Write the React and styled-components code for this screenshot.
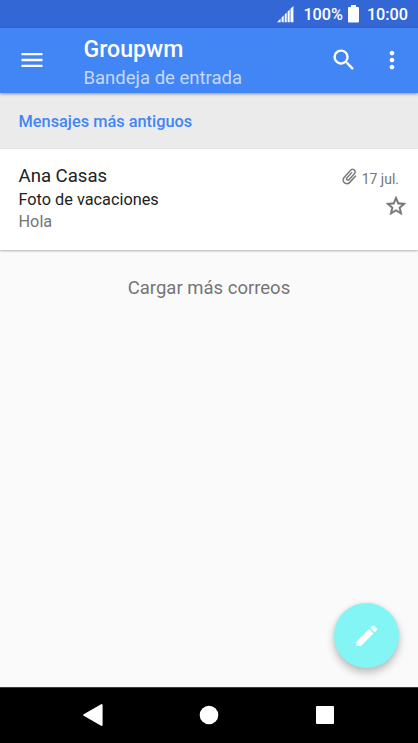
import React from 'react';
import styled, { createGlobalStyle } from 'styled-components';

const GlobalStyle = createGlobalStyle`
  * {
    box-sizing: border-box;
  }

  body {
    margin: 0;
    font-family: Roboto, "Liberation Sans", sans-serif;
  }
`;

function App() {
  return (
    <>
      <GlobalStyle />
      <Screen>
        <StatusBar>
          <SignalIcon viewBox="0 0 17 17">
            <path d="M0 16.2 L3.6 12.6 V16.2 Z M4.6 11.6 L6.7 9.5 V16.2 H4.6 Z M7.7 8.5 L9.7 6.5 V16.2 H7.7 Z M10.6 5.6 L12.7 3.6 V16.2 H10.6 Z M13.5 2.8 L16.4 0 V16.2 H13.5 Z" />
          </SignalIcon>
          <StatusText>100%</StatusText>
          <BatteryIcon viewBox="0 0 11 18">
            <path d="M3 0 H8 V2 H10 Q11 2 11 3 V16.5 Q11 17.5 10 17.5 H1 Q0 17.5 0 16.5 V3 Q0 2 1 2 H3 Z" />
          </BatteryIcon>
          <StatusText>10:00</StatusText>
        </StatusBar>

        <AppBar>
          <IconButton aria-label="Menú">
            <Icon viewBox="0 0 24 24">
              <path d="M3 18h18v-2H3v2zm0-5h18v-2H3v2zm0-7v2h18V6H3z" />
            </Icon>
          </IconButton>
          <Titles>
            <Title>Groupwm</Title>
            <Subtitle>Bandeja de entrada</Subtitle>
          </Titles>
          <Actions>
            <IconButton aria-label="Buscar">
              <Icon viewBox="0 0 24 24">
                <path d="M15.5 14h-.79l-.28-.27C15.41 12.59 16 11.11 16 9.5 16 5.91 13.09 3 9.5 3S3 5.91 3 9.5 5.91 16 9.5 16c1.61 0 3.09-.59 4.23-1.57l.27.28v.79l5 4.99L20.49 19l-4.99-5zm-6 0C7.01 14 5 11.99 5 9.5S7.01 5 9.5 5 14 7.01 14 9.5 11.99 14 9.5 14z" />
              </Icon>
            </IconButton>
            <IconButton aria-label="Más opciones">
              <Icon viewBox="0 0 24 24">
                <path d="M12 8c1.1 0 2-.9 2-2s-.9-2-2-2-2 .9-2 2 .9 2 2 2zm0 2c-1.1 0-2 .9-2 2s.9 2 2 2 2-.9 2-2-.9-2-2-2zm0 6c-1.1 0-2 .9-2 2s.9 2 2 2 2-.9 2-2-.9-2-2-2z" />
              </Icon>
            </IconButton>
          </Actions>
        </AppBar>

        <SectionHeader>Mensajes más antiguos</SectionHeader>

        <Message>
          <MessageText>
            <Sender>Ana Casas</Sender>
            <Subject>Foto de vacaciones</Subject>
            <Preview>Hola</Preview>
          </MessageText>
          <MessageMeta>
            <DateRow>
              <ClipIcon viewBox="0 0 24 24">
                <path d="M16.5 6v11.5c0 2.21-1.79 4-4 4s-4-1.79-4-4V5c0-1.38 1.12-2.5 2.5-2.5s2.5 1.12 2.5 2.5v10.5c0 .55-.45 1-1 1s-1-.45-1-1V6H10v9.5c0 1.38 1.12 2.5 2.5 2.5s2.5-1.12 2.5-2.5V5c0-2.21-1.79-4-4-4S7 2.79 7 5v12.5c0 3.04 2.46 5.5 5.5 5.5s5.5-2.46 5.5-5.5V6h-1.5z" />
              </ClipIcon>
              <DateText>17 jul.</DateText>
            </DateRow>
            <StarIcon viewBox="0 0 24 24">
              <path d="M22 9.24l-7.19-.62L12 2 9.19 8.63 2 9.24l5.46 4.73L5.82 21 12 17.27 18.18 21l-1.63-7.03L22 9.24zM12 15.4l-3.76 2.27 1-4.28-3.32-2.88 4.38-.38L12 6.1l1.71 4.04 4.38.38-3.32 2.88 1 4.28L12 15.4z" />
            </StarIcon>
          </MessageMeta>
        </Message>

        <LoadMore>Cargar más correos</LoadMore>

        <ComposeButton aria-label="Redactar">
          <PencilIcon viewBox="0 0 24 24">
            <path d="M3 17.46v3.04c0 .28.22.5.5.5h3.04c.13 0 .26-.05.35-.15L17.81 9.94l-3.75-3.75L3.15 17.1c-.1.1-.15.22-.15.36zM20.71 7.04c.39-.39.39-1.02 0-1.41l-2.34-2.34c-.39-.39-1.02-.39-1.41 0l-1.83 1.83 3.75 3.75 1.83-1.83z" />
          </PencilIcon>
        </ComposeButton>

        <NavBar>
          <NavIcon viewBox="0 0 24 24">
            <path d="M3.2 12 L20.6 2 V22 Z" strokeWidth="2" strokeLinejoin="round" />
          </NavIcon>
          <NavIcon viewBox="0 0 24 24">
            <circle cx="12" cy="12" r="9.3" />
          </NavIcon>
          <NavIcon viewBox="0 0 24 24">
            <rect x="3" y="3" width="18" height="18" rx="1" />
          </NavIcon>
        </NavBar>
      </Screen>
    </>
  );
}

const Screen = styled.main`
  position: relative;
  display: flex;
  flex-direction: column;
  height: 743px;
  overflow: hidden;
  background-color: #fafafa;
`;

const StatusBar = styled.div`
  display: flex;
  flex: none;
  justify-content: flex-end;
  align-items: center;
  height: 28px;
  padding-right: 10px;
  background-color: #3367d6;
  color: white;
`;

const StatusText = styled.span`
  font-size: 16.2px;
  font-weight: 500;
  line-height: 28px;
  padding-top: 2px;
`;

const SignalIcon = styled.svg`
  width: 17px;
  height: 17px;
  margin-right: 9px;
  fill: white;
`;

const BatteryIcon = styled.svg`
  width: 11px;
  height: 18px;
  margin: 0 8px 0 5px;
  fill: white;
`;

const AppBar = styled.header`
  position: relative;
  z-index: 1;
  display: flex;
  flex: none;
  height: 65px;
  padding: 0 12px 0 18px;
  background-color: #4285f4;
  box-shadow: 0 1px 3px rgba(0, 0, 0, 0.4);
  color: white;
`;

const IconButton = styled.button`
  display: flex;
  align-items: center;
  padding: 0 0 1px;
  border: none;
  background: none;
  color: inherit;
`;

const Icon = styled.svg`
  display: block;
  width: 28px;
  height: 28px;
  fill: currentColor;
`;

const PencilIcon = styled(Icon)`
  width: 27.5px;
  height: 27.5px;
`;

const Titles = styled.div`
  flex: 1;
  padding: 7px 0 0 37.5px;
  white-space: nowrap;
`;

const Title = styled.h1`
  margin: 0;
  font-size: 23.1px;
  font-weight: 500;
  line-height: 29px;
`;

const Subtitle = styled.div`
  font-size: 18.5px;
  line-height: 28px;
  color: rgba(255, 255, 255, 0.7);
`;

const Actions = styled.div`
  display: flex;
  gap: 20px;
`;

const SectionHeader = styled.h2`
  flex: none;
  height: 56px;
  margin: 0;
  padding-left: 18.5px;
  background-color: #ebebeb;
  color: #4285f4;
  font-size: 16.35px;
  font-weight: 500;
  line-height: 57px;
`;

const Message = styled.article`
  display: flex;
  flex: none;
  justify-content: space-between;
  height: 101px;
  padding: 15px 0 0 18.5px;
  background-color: white;
  box-shadow: 0 1px 2px rgba(0, 0, 0, 0.3);
`;

const MessageText = styled.div`
  color: #212121;
`;

const Sender = styled.div`
  font-size: 18.6px;
  line-height: 24px;
`;

const Subject = styled.div`
  font-size: 16.3px;
  line-height: 24px;
`;

const Preview = styled.div`
  font-size: 16.3px;
  line-height: 19px;
  color: #757575;
`;

const MessageMeta = styled.div`
  display: flex;
  flex-direction: column;
  align-items: flex-end;
  color: #757575;
`;

const DateRow = styled.div`
  display: flex;
  align-items: center;
  height: 30px;
  padding-right: 19px;
`;

const ClipIcon = styled.svg`
  width: 19px;
  height: 19px;
  margin: 0 3px 6px 0;
  fill: currentColor;
  stroke: currentColor;
  stroke-width: 0.3;
  transform: rotate(42deg);
`;

const DateText = styled.span`
  font-size: 14px;
`;

const StarIcon = styled.svg`
  width: 24px;
  height: 24px;
  margin-right: 10px;
  fill: currentColor;
  stroke: currentColor;
  stroke-width: 0.4;
`;

const LoadMore = styled.div`
  padding-top: 27px;
  color: #757575;
  font-size: 18.5px;
  line-height: 22px;
  text-align: center;
`;

const ComposeButton = styled.button`
  position: absolute;
  right: 19px;
  bottom: 75px;
  display: flex;
  justify-content: center;
  align-items: center;
  width: 65px;
  height: 65px;
  padding: 0;
  border: none;
  border-radius: 50%;
  background-color: #84f5f5;
  box-shadow: 0 5px 8px rgba(0, 0, 0, 0.24), 0 0 4px rgba(0, 0, 0, 0.08);
  color: white;
`;

const NavBar = styled.nav`
  display: flex;
  flex: none;
  justify-content: center;
  align-items: center;
  gap: 92px;
  height: 56px;
  margin-top: auto;
  background-color: black;
  box-shadow: inset 0 1px #3c3c3c;
`;

const NavIcon = styled.svg`
  width: 24px;
  height: 24px;
  fill: white;
  stroke: white;
  stroke-width: 0;
`;

export default App;
